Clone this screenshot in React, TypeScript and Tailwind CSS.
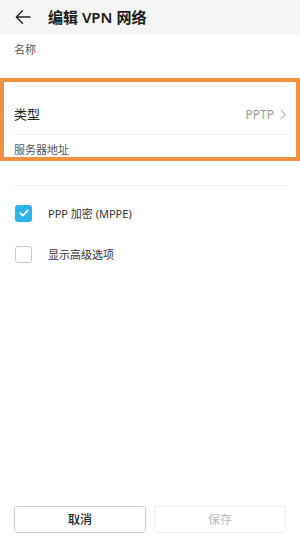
import React from "react";

export default function App() {
  const font = { fontFamily: '"Noto Sans", "Noto Sans CJK SC", sans-serif' };
  return (
    <div
      className="relative w-[300px] min-h-[537px] flex flex-col bg-white text-[#222]"
      style={font}
    >
      {/* Header */}
      <div className="h-[34px] bg-[#f5f5f5] flex items-center">
        <svg
          className="ml-[15px]"
          width="16"
          height="16"
          viewBox="0 0 16 16"
          fill="none"
          stroke="#222"
          strokeWidth="1.4"
          strokeLinecap="round"
          strokeLinejoin="round"
        >
          <path d="M15 8H1.5M7.5 1.8L1.3 8l6.2 6.2" />
        </svg>
        <span className="ml-[17px] text-[15px] font-semibold leading-none text-[#1a1a1a]">
          编辑 VPN 网络
        </span>
      </div>

      {/* 名称 */}
      <div className="mx-[14px] h-[53px] border-b border-[#ececec] pt-[10px]">
        <span className="block text-[11px] leading-[11px] text-[#555]">名称</span>
      </div>

      {/* 类型 */}
      <div className="mx-[14px] h-[48px] border-b border-[#ececec] flex items-center justify-between pt-[8px]">
        <span className="text-[13px] leading-none text-[#222]">类型</span>
        <span className="flex items-center text-[12px] leading-none text-[#999]">
          PPTP
          <svg
            className="ml-[6px]"
            width="6"
            height="11"
            viewBox="0 0 6 11"
            fill="none"
            stroke="#bbb"
            strokeWidth="1.1"
          >
            <path d="M0.6 0.6l4.6 4.9-4.6 4.9" />
          </svg>
        </span>
      </div>

      {/* 服务器地址 */}
      <div className="mx-[14px] h-[51px] border-b border-[#ececec] pt-[9px]">
        <span className="block text-[11px] leading-[11px] text-[#555]">服务器地址</span>
      </div>

      {/* Checkboxes */}
      <div className="mt-[18px] flex items-center h-[18px] px-[15px]">
        <div className="w-[17px] h-[17px] rounded-[3px] bg-[#2fb3e6] flex items-center justify-center">
          <svg width="10" height="8" viewBox="0 0 10 8" fill="none" stroke="#fff" strokeWidth="1.6" strokeLinecap="round" strokeLinejoin="round">
            <path d="M1.2 4.2l2.6 2.4L8.8 1.4" />
          </svg>
        </div>
        <span className="ml-[16px] text-[11px] leading-none text-[#333]">PPP 加密 (MPPE)</span>
      </div>
      <div className="mt-[23px] flex items-center h-[18px] px-[15px]">
        <div className="w-[17px] h-[17px] rounded-[3px] border border-[#c8c8c8] bg-white" />
        <span className="ml-[16px] text-[11px] leading-none text-[#333]">显示高级选项</span>
      </div>

      {/* Buttons */}
      <div className="mt-auto mb-[4px] px-[14px] flex gap-[8px]">
        <button className="flex-1 h-[27px] rounded-[3px] border border-[#cfcfcf] bg-white text-[12px] font-medium text-[#222]">
          取消
        </button>
        <button className="flex-1 h-[27px] rounded-[3px] border border-[#eeeeee] bg-white text-[12px] text-[#bbb]">
          保存
        </button>
      </div>

      {/* Annotation highlight */}
      <div className="pointer-events-none absolute left-0 top-[78px] w-[300px] h-[83px] border-[4px] border-[#f2913f]" />
    </div>
  );
}
